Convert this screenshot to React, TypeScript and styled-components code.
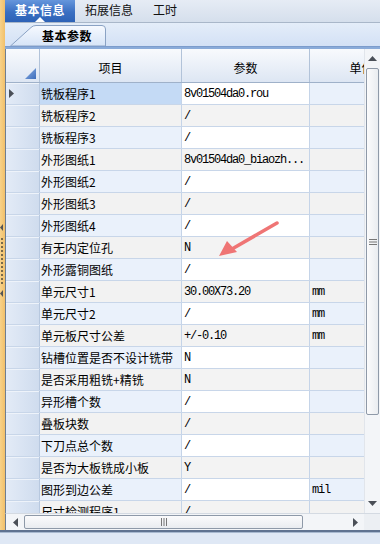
import React from "react";
import styled, { createGlobalStyle } from "styled-components";

const Global = createGlobalStyle`
  html, body { margin: 0; padding: 0; background: #dfe8f5; }
  body { font-family: "Noto Sans CJK SC", "Noto Sans", sans-serif; font-size: 12px; color: #000; }
  * { box-sizing: border-box; }
`;

const rows: [string, string, string][] = [
  ["铣板程序1", "8v01504da0.rou", ""],
  ["铣板程序2", "/", ""],
  ["铣板程序3", "/", ""],
  ["外形图纸1", "8v01504da0_biaozh...", ""],
  ["外形图纸2", "/", ""],
  ["外形图纸3", "/", ""],
  ["外形图纸4", "/", ""],
  ["有无内定位孔", "N", ""],
  ["外形露铜图纸", "/", ""],
  ["单元尺寸1", "30.00X73.20", "mm"],
  ["单元尺寸2", "/", "mm"],
  ["单元板尺寸公差", "+/-0.10", "mm"],
  ["钻槽位置是否不设计铣带", "N", ""],
  ["是否采用粗铣+精铣", "N", ""],
  ["异形槽个数", "/", ""],
  ["叠板块数", "/", ""],
  ["下刀点总个数", "/", ""],
  ["是否为大板铣成小板", "Y", ""],
  ["图形到边公差", "/", "mil"],
  ["尺寸检测程序1", "/", ""],
];

const Root = styled.div`
  position: relative;
  width: 380px;
  height: 544px;
  display: flex;
  flex-direction: column;
  overflow: hidden;
`;

const Body = styled.div`
  height: 530px;
  display: flex;
`;

const Strip = styled.div`
  width: 5px;
  background: linear-gradient(to right, #f7d28a, #f2c06a);
  display: flex;
  flex-direction: column;
  padding-top: 224px;
`;

const Panel = styled.div`
  flex: 1;
  display: flex;
  flex-direction: column;
  min-width: 0;
`;

const TopTabBar = styled.div`
  height: 23px;
  display: flex;
  background: linear-gradient(#e6ecf5, #d5dfec);
  border-bottom: 1px solid #a9b7c9;
`;

const TopTab = styled.div<{ $active?: boolean }>`
  position: relative;
  padding: 0 10px;
  height: 22px;
  line-height: 20px;
  font-size: 12px;
  font-weight: ${(p) => (p.$active ? 700 : 400)};
  color: ${(p) => (p.$active ? "#fff" : "#111")};
  background: ${(p) => (p.$active ? "linear-gradient(#6596dc, #3a6fc2 55%, #2d62b6)" : "transparent")};
  letter-spacing: ${(p) => (p.$active ? "0.5px" : "0")};
`;

const TabPointer = styled.span`
  position: absolute;
  left: 50%;
  bottom: 0;
  margin-left: -5px;
  width: 0;
  height: 0;
  border-left: 5px solid transparent;
  border-right: 5px solid transparent;
  border-bottom: 5px solid #fff;
`;

const SubTabBar = styled.div`
  height: 23px;
  display: flex;
  align-items: flex-end;
  padding-left: 5px;
  background: linear-gradient(#e4edf9, #d3e1f5);
`;

const SubTab = styled.div`
  position: relative;
  width: 96px;
  height: 21px;
  padding-left: 32px;
  display: flex;
  align-items: center;
  font-weight: 700;
  font-size: 12px;
`;

const SubTabShape = styled.svg`
  position: absolute;
  left: 0;
  top: 0;
`;

const SubTabLabel = styled.span`
  position: relative;
  letter-spacing: 0.5px;
`;

const Band = styled.div`
  height: 3px;
  background: #8aabd9;
  border-top: 1px solid #7c9ccc;
`;

const GridArea = styled.div`
  flex: 1;
  display: flex;
  min-height: 0;
  border-left: 1px solid #6f7e90;
`;

const Viewport = styled.div`
  flex: 1;
  overflow: hidden;
  background: #fff;
`;

const COLS = "34px 142px 128px 104px";

const HeaderRow = styled.div`
  display: grid;
  grid-template-columns: ${COLS};
  height: 34px;
  border-bottom: 1px solid #9fb1c9;
  background: linear-gradient(#f8fafd, #e8eef7 60%, #dde6f3);
`;

const HeaderCell = styled.div`
  border-right: 1px solid #b2c3d9;
  display: flex;
  align-items: center;
  justify-content: center;
  padding-top: 3px;
  font-size: 12px;
  white-space: nowrap;
  overflow: hidden;
`;

const CornerCell = styled.div`
  position: relative;
  border-right: 1px solid #b2c3d9;
  display: flex;
  align-items: flex-end;
  justify-content: flex-end;
  padding: 0 3px 3px 0;
`;

const Row = styled.div`
  display: grid;
  grid-template-columns: ${COLS};
  height: 22px;
  border-bottom: 1px solid #c8d6e9;
`;

const Indicator = styled.div`
  border-right: 1px solid #b7c8df;
  background: linear-gradient(to right, #e3ebf7, #cfdcee);
  box-shadow: inset 0 1px 0 #eef3fa;
  display: flex;
  align-items: center;
  padding-left: 3px;
`;

const Cell = styled.div<{ $bg: string; $mono?: boolean }>`
  background: ${(p) => p.$bg};
  border-right: 1px solid #c5d4e8;
  display: flex;
  align-items: center;
  padding-left: ${(p) => (p.$mono ? "2px" : "1px")};
  white-space: nowrap;
  overflow: hidden;
  font-family: ${(p) => (p.$mono ? '"Liberation Mono", "DejaVu Sans Mono", monospace' : '"Noto Sans CJK SC", sans-serif')};
  font-size: 12px;
  letter-spacing: ${(p) => (p.$mono ? "-1.2px" : "0")};
`;

const VScroll = styled.div`
  width: 16px;
  display: flex;
  flex-direction: column;
  align-items: center;
  background: #f3f5f8;
  border-left: 1px solid #e1e5eb;
`;

const ArrowBtn = styled.div`
  height: 19px;
  width: 100%;
  display: flex;
  align-items: center;
  justify-content: center;
`;

const VThumb = styled.div`
  width: 13px;
  height: 347px;
  border: 1px solid #8e99a8;
  border-radius: 2px;
  background: linear-gradient(to right, #fbfbfc, #e9ecf0);
  display: flex;
  align-items: center;
  justify-content: center;
`;

const VTrack = styled.div`
  flex: 1;
`;

const HScrollRow = styled.div`
  height: 17px;
  display: flex;
  border-left: 1px solid #6f7e90;
  border-top: 1px solid #d4dae2;
  background: #f3f5f8;
`;

const HBtn = styled.div`
  width: 18px;
  display: flex;
  align-items: center;
  justify-content: center;
`;

const HThumb = styled.div`
  width: 279px;
  margin-top: 1px;
  height: 14px;
  border: 1px solid #8e99a8;
  border-radius: 2px;
  background: linear-gradient(#fbfbfc, #e9ecf0);
  display: flex;
  align-items: center;
  justify-content: center;
`;

const HTrack = styled.div`
  flex: 1;
`;

const Corner = styled.div`
  width: 16px;
  background: #eceff3;
`;

const Footer = styled.div`
  flex: 1;
  border-top: 2px solid #5f7391;
  box-shadow: inset 0 1px 0 #a8b9d0;
  background: #dfe8f5;
`;

const Annotation = styled.svg`
  position: absolute;
  left: 214px;
  top: 216px;
`;

const Tri = ({ dir }: { dir: "up" | "down" | "left" | "right" }) => {
  const pts =
    dir === "up" ? "0,5 4.5,0 9,5" : dir === "down" ? "0,0 9,0 4.5,5" : dir === "left" ? "5,0 5,9 0,4.5" : "0,0 0,9 5,4.5";
  const w = dir === "up" || dir === "down" ? 9 : 5;
  const h = dir === "up" || dir === "down" ? 5 : 9;
  return (
    <svg width={w} height={h} viewBox={`0 0 ${w} ${h}`}>
      <polygon points={pts} fill="#4a4f57" />
    </svg>
  );
};

export default function App() {
  return (
    <Root>
      <Global />
      <Body>
        <Strip>
          <svg width="5" height="75" viewBox="0 0 5 75">
            <polygon points="3,0 3,7 0,3.5" fill="#555" />
            {Array.from({ length: 12 }).map((_, i) => (
              <rect key={i} x={1} y={14 + i * 4} width={2} height={2} fill="#7a6a4a" />
            ))}
            <polygon points="3,66 3,73 0,69.5" fill="#555" />
          </svg>
        </Strip>
        <Panel>
          <TopTabBar>
            <TopTab $active>
              基本信息
              <TabPointer />
            </TopTab>
            <TopTab>拓展信息</TopTab>
            <TopTab>工时</TopTab>
          </TopTabBar>
          <SubTabBar>
            <SubTab>
              <SubTabShape width="96" height="21" viewBox="0 0 96 21">
                <defs>
                  <linearGradient id="st" x1="0" y1="0" x2="0" y2="1">
                    <stop offset="0" stopColor="#f7faff" />
                    <stop offset="1" stopColor="#d6e4f7" />
                  </linearGradient>
                </defs>
                <path
                  d="M0.5 21 L21 2.5 Q23 0.5 26 0.5 L92 0.5 Q95.5 0.5 95.5 4 L95.5 21 Z"
                  fill="url(#st)"
                  stroke="#8aa2c4"
                  strokeWidth="1"
                />
              </SubTabShape>
              <SubTabLabel>基本参数</SubTabLabel>
            </SubTab>
          </SubTabBar>
          <Band />
          <GridArea>
            <Viewport>
              <HeaderRow>
                <CornerCell>
                  <svg width="11" height="11" viewBox="0 0 11 11">
                    <defs>
                      <linearGradient id="ct" x1="0" y1="0" x2="1" y2="1">
                        <stop offset="0" stopColor="#8fb2e6" />
                        <stop offset="1" stopColor="#3d6dbb" />
                      </linearGradient>
                    </defs>
                    <polygon points="11,0 11,11 0,11" fill="url(#ct)" />
                  </svg>
                </CornerCell>
                <HeaderCell>项目</HeaderCell>
                <HeaderCell>参数</HeaderCell>
                <HeaderCell>单位</HeaderCell>
              </HeaderRow>
              {rows.map(([item, value, unit], i) => {
                const even = i % 2 === 1;
                const side = even ? "#f2f2f2" : "#eaf1fb";
                const itemBg = i === 0 ? "#c4daf5" : side;
                const valBg = even ? "#f3f3f3" : "#ffffff";
                return (
                  <Row key={i}>
                    <Indicator>{i === 0 && <Tri dir="right" />}</Indicator>
                    <Cell $bg={itemBg}>{item}</Cell>
                    <Cell $bg={valBg} $mono>
                      {value}
                    </Cell>
                    <Cell $bg={side} $mono>
                      {unit}
                    </Cell>
                  </Row>
                );
              })}
            </Viewport>
            <VScroll>
              <ArrowBtn>
                <Tri dir="up" />
              </ArrowBtn>
              <VThumb>
                <svg width="8" height="6" viewBox="0 0 8 6">
                  <rect x="0" y="0" width="8" height="1" fill="#777" />
                  <rect x="0" y="2.5" width="8" height="1" fill="#777" />
                  <rect x="0" y="5" width="8" height="1" fill="#777" />
                </svg>
              </VThumb>
              <VTrack />
              <ArrowBtn>
                <Tri dir="down" />
              </ArrowBtn>
            </VScroll>
          </GridArea>
          <HScrollRow>
            <HBtn>
              <Tri dir="left" />
            </HBtn>
            <HThumb>
              <svg width="6" height="8" viewBox="0 0 6 8">
                <rect x="0" y="0" width="1" height="8" fill="#777" />
                <rect x="2.5" y="0" width="1" height="8" fill="#777" />
                <rect x="5" y="0" width="1" height="8" fill="#777" />
              </svg>
            </HThumb>
            <HTrack />
            <HBtn>
              <Tri dir="right" />
            </HBtn>
            <Corner />
          </HScrollRow>
        </Panel>
      </Body>
      <Footer />
      <Annotation width="70" height="45" viewBox="0 0 70 45">
        <line x1="63" y1="7" x2="18" y2="33" stroke="#ef7575" strokeWidth="3.5" strokeLinecap="round" />
        <polygon points="5,40 13,25 23,36" fill="#ef7575" />
      </Annotation>
    </Root>
  );
}
